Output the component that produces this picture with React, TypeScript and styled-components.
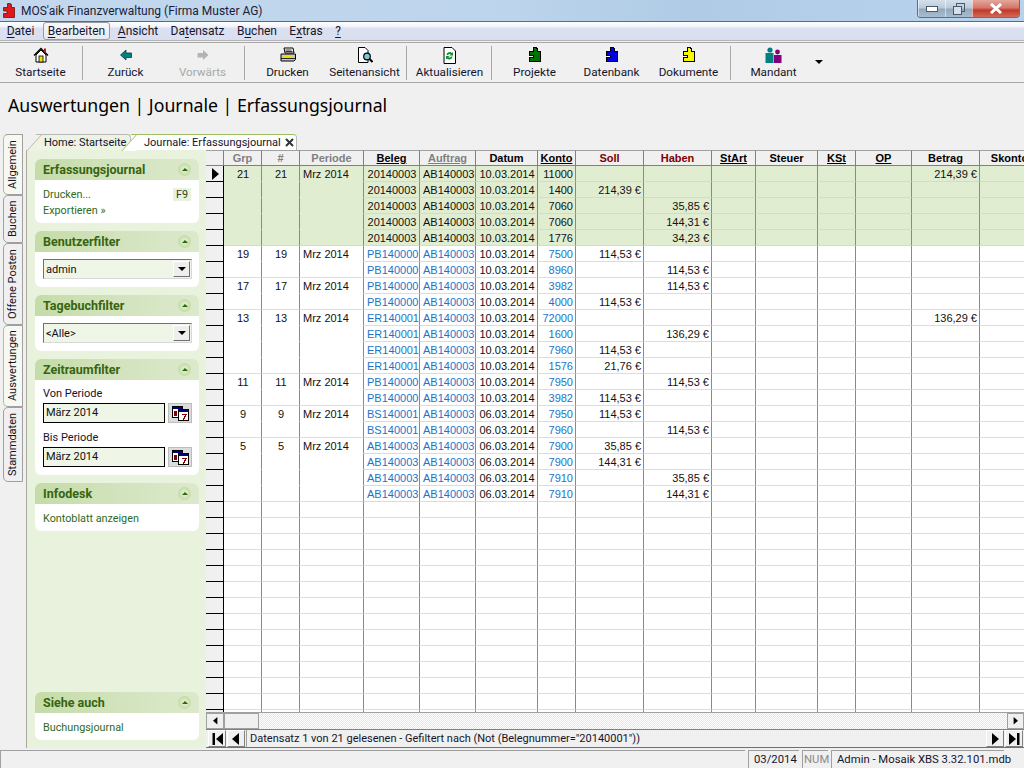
import React from 'react';
import styled, { createGlobalStyle } from 'styled-components';

const GlobalStyle = createGlobalStyle`
  html, body { margin: 0; padding: 0; background: #f0f0f0; }
  * { box-sizing: border-box; }
`;

const uiFont = `Roboto, "Noto Sans", "Liberation Sans", sans-serif`;
const headFont = `"Noto Sans", "Liberation Sans", sans-serif`;
const gridFont = `"Liberation Sans", Arial, sans-serif`;

const Window = styled.div`
  width: 1024px;
  height: 768px;
  display: flex;
  flex-direction: column;
  overflow: hidden;
  background: #f0f0f0;
  font-family: ${uiFont};
  font-size: 11px;
  color: #000;
`;

const TitleBar = styled.div`
  height: 22px;
  flex: none;
  display: flex;
  align-items: flex-start;
  padding-left: 2px;
  background: linear-gradient(90deg, #c3d8ee 0%, #bcd4ec 50%, #afcbe5 68%, #b5d0ea 85%, #b8d2ea 100%);
  border-bottom: 1px solid #5d6b79;
`;

const LogoSlot = styled.div`
  margin-top: 3px;
  height: 15px;
`;

const TitleText = styled.span`
  margin: 2px 0 0 5px;
  font-size: 12px;
  line-height: 18px;
  color: #1c1c38;
  flex: 1;
`;

const WindowButtons = styled.div`
  display: flex;
  height: 18px;
  margin-right: 4px;
  border: 1px solid #5f6f80;
  border-top: 0;
  border-radius: 0 0 4px 4px;
  overflow: hidden;
`;

const WindowButton = styled.div<{ $w: number; $close?: boolean }>`
  width: ${p => p.$w}px;
  display: flex;
  align-items: center;
  justify-content: center;
  border-left: 1px solid rgba(255, 255, 255, 0.55);
  background: ${p =>
    p.$close
      ? 'linear-gradient(#e3a79c 0%, #d6776a 45%, #bf3a2a 60%, #d26a55 100%)'
      : 'linear-gradient(#d5e0ec 0%, #bccbdb 45%, #95a9bd 55%, #a9bdd0 100%)'};
`;

const MenuBar = styled.div`
  height: 19px;
  flex: none;
  display: flex;
  align-items: center;
  padding-left: 3px;
  background: linear-gradient(#ffffff 0%, #f2f4fa 25%, #dce1f2 35%, #d9dff0 100%);
  border-bottom: 1px solid #b4b4b4;
`;

const MenuItem = styled.div<{ $w: number; $hot?: boolean }>`
  width: ${p => p.$w}px;
  height: 18px;
  margin: 0 ${p => (p.$hot ? 4 : 0)}px 0 ${p => (p.$hot ? 5 : 0)}px;
  text-align: center;
  font-size: 12px;
  color: #15152c;
  border-radius: 3px;
  border: ${p => (p.$hot ? '1px solid #9a9a9a' : '0')};
  line-height: ${p => (p.$hot ? 16 : 18)}px;
  background: ${p => (p.$hot ? 'linear-gradient(#f8f8fb, #e7e9f2)' : 'transparent')};
  u { text-underline-offset: 2px; }
`;

const ToolBar = styled.div`
  height: 41px;
  flex: none;
  margin-top: 1px;
  display: flex;
  align-items: center;
  padding-left: 2px;
  border-top: 1px solid #a8a8a8;
  border-bottom: 1px solid #a8a8a8;
`;

const ToolButton = styled.div<{ $off?: boolean }>`
  width: 77px;
  height: 38px;
  display: flex;
  flex-direction: column;
  align-items: center;
  font-size: 11.7px;
  line-height: 16px;
  color: ${p => (p.$off ? '#a8a8a8' : '#14142a')};
`;

const ToolIcon = styled.div`
  height: 20px;
  padding-top: 3px;
  display: flex;
  justify-content: center;
`;

const ToolSep = styled.div`
  width: 1px;
  height: 34px;
  margin: 0 4px 0 3px;
  background: #a8a8a8;
`;

const DropArrow = styled.div`
  width: 0;
  height: 0;
  margin: 0 0 0 3px;
  border: 4px solid transparent;
  border-top: 4px solid #000;
  border-bottom: 0;
  position: relative;
  top: -1px;
`;

const Heading = styled.h1`
  height: 51px;
  flex: none;
  margin: 0;
  padding: 10px 0 0 8px;
  font-family: ${headFont};
  font-weight: 400;
  font-size: 17.7px;
  line-height: 24px;
  color: #000;
`;

const Main = styled.div`
  height: 616px;
  flex: none;
  display: flex;
`;

const SideTabs = styled.div`
  width: 26px;
  flex: none;
  padding: 0 0 0 3px;
  display: flex;
  flex-direction: column;
`;

const SideTab = styled.div<{ $h: number; $active?: boolean }>`
  width: 20px;
  height: ${p => p.$h}px;
  writing-mode: vertical-rl;
  transform: rotate(180deg);
  text-align: center;
  font-size: 11px;
  line-height: 18px;
  color: #14142a;
  background: ${p => (p.$active ? '#f6f8f1' : '#f0f0f0')};
  border: 1px solid #a0a0a0;
  border-right-color: ${p => (p.$active ? '#a8c878' : '#a0a0a0')};
  border-radius: 0 5px 5px 0;
`;

const Workspace = styled.div`
  flex: 1;
  min-width: 0;
  display: flex;
  flex-direction: column;
`;

const TabStrip = styled.div`
  height: 16px;
  flex: none;
  display: flex;
  align-items: flex-end;
  padding-left: 10px;
`;

const DocTab = styled.div<{ $w: number; $active?: boolean }>`
  position: relative;
  width: ${p => p.$w}px;
  height: 16px;
  display: flex;
  align-items: center;
  gap: 4px;
  padding-left: ${p => (p.$active ? 13 : 8)}px;
  font-size: 11px;
  line-height: 14px;
  white-space: nowrap;
  color: #14142a;
  background: ${p => (p.$active ? '#ffffff' : '#eef3e4')};
  border-top: 1px solid ${p => (p.$active ? '#9cc060' : '#b8b8b8')};
  border-right: 1px solid #b8b8b8;
  border-radius: 0 4px 0 0;
  z-index: ${p => (p.$active ? 2 : 1)};
  &::before {
    content: '';
    position: absolute;
    left: -2px;
    top: -1px;
    width: 14px;
    height: 16px;
    background: inherit;
    border-left: 1px solid ${p => (p.$active ? '#9cc060' : '#b8b8b8')};
    border-top: 1px solid ${p => (p.$active ? '#9cc060' : '#b8b8b8')};
    transform: skewX(-42deg);
    z-index: -1;
  }
`;

const Content = styled.div`
  flex: 1;
  min-height: 0;
  display: flex;
`;

const Sidebar = styled.aside`
  width: 180px;
  height: 598px;
  flex: none;
  display: flex;
  flex-direction: column;
  gap: 8px;
  padding: 9px 7px 8px 8px;
  background: #e9f2dd;
  border-left: 1px solid #a8a89c;
`;

const Card = styled.section<{ $bottom?: boolean }>`
  border-radius: 6px;
  overflow: hidden;
  background: #fff;
  margin-top: ${p => (p.$bottom ? 'auto' : '0')};
`;

const CardHead = styled.div`
  height: 21px;
  display: flex;
  align-items: center;
  justify-content: space-between;
  padding: 0 8px;
  background: linear-gradient(90deg, #c4dca8 0%, #d2e3bd 50%, #dce9cc 100%);
  font-weight: 700;
  font-size: 12.5px;
  color: #37640f;
`;

const Collapse = styled.div`
  width: 13px;
  height: 13px;
  border-radius: 50%;
  background: radial-gradient(circle, #eaf3dc 0%, #c2dba2 70%, #b5d192 100%);
  display: flex;
  align-items: center;
  justify-content: center;
  &::after {
    content: '';
    border: 3px solid transparent;
    border-bottom: 3px solid #2f6410;
    border-top: 0;
  }
`;

const CardBody = styled.div<{ $end?: number }>`
  padding: 6px 8px ${p => p.$end ?? 5}px;
  display: flex;
  flex-direction: column;
`;

const LinkRow = styled.div`
  display: flex;
  justify-content: space-between;
  height: 16px;
  align-items: center;
  color: #2f6a22;
  font-size: 10.8px;
`;

const KeyHint = styled.span`
  width: 18px;
  height: 13px;
  text-align: center;
  line-height: 13px;
  background: #e9f2dd;
  color: #30421f;
`;

const SelectBox = styled.div`
  height: 20px;
  margin: 1px -1px 0 0;
  display: flex;
  align-items: center;
  justify-content: space-between;
  padding-left: 2px;
  background: #f0f6e7;
  border: 1px solid;
  border-color: #707070 #d8d8d8 #d8d8d8 #707070;
  color: #111;
`;

const SelectButton = styled.div`
  width: 17px;
  height: 16px;
  margin-right: 1px;
  background: #eeeeee;
  border: 1px solid;
  border-color: #fff #707070 #707070 #fff;
  display: flex;
  align-items: center;
  justify-content: center;
  &::after {
    content: '';
    border: 4px solid transparent;
    border-top: 4px solid #000;
    border-bottom: 0;
  }
`;

const FieldLabel = styled.div<{ $gap?: number }>`
  height: 16px;
  margin-top: ${p => p.$gap ?? 0}px;
  line-height: 16px;
  color: #14142a;
`;

const FieldRow = styled.div`
  display: flex;
  justify-content: space-between;
  margin: 1px -1px 0 0;
  height: 20px;
`;

const DateInput = styled.div`
  width: 122px;
  padding-left: 2px;
  line-height: 18px;
  background: #eff5e7;
  border: 1px solid #000;
  color: #111;
`;

const CalendarButton = styled.div`
  width: 24px;
  background: #dcdcdc;
  border: 1px solid #bcbcbc;
  display: flex;
  align-items: center;
  justify-content: center;
`;

const GridPane = styled.div`
  flex: 1;
  min-width: 0;
  display: flex;
  flex-direction: column;
  border-bottom: 1px solid #707070;
  height: 598px;
`;

const GridScroll = styled.div`
  height: 562px;
  flex: none;
  overflow: hidden;
`;

const GridRow = styled.div`
  display: flex;
  height: 16px;
  width: 900px;
`;

const Selector = styled.div<{ $head?: boolean }>`
  width: 18px;
  flex: none;
  background: #f0f0f0;
  border-top: ${p => (p.$head ? '1px solid #a0a0a0' : '0')};
  border-right: 1px solid ${p => (p.$head ? '#808080' : '#000')};
  border-bottom: 1px solid ${p => (p.$head ? '#808080' : '#000')};
  display: flex;
  align-items: center;
  justify-content: center;
`;

const HeadCell = styled.div<{ $w: number; $tone: string; $line?: boolean }>`
  width: ${p => p.$w}px;
  flex: none;
  text-align: center;
  font-family: ${gridFont};
  font-weight: 700;
  font-size: 11px;
  line-height: 14px;
  background: #f0f0f0;
  color: ${p => p.$tone};
  text-decoration: ${p => (p.$line ? 'underline' : 'none')};
  border-top: 1px solid #a0a0a0;
  border-right: 1px solid #808080;
  border-bottom: 1px solid #808080;
`;

const Cell = styled.div<{ $w: number; $align: string; $tone: string; $green: boolean; $open?: boolean }>`
  width: ${p => p.$w}px;
  flex: none;
  padding: 1px 2px 0 3px;
  text-align: ${p => p.$align};
  font-family: ${gridFont};
  font-size: 11px;
  line-height: 14px;
  white-space: nowrap;
  overflow: hidden;
  color: ${p => p.$tone};
  background: ${p => (p.$green ? '#e1edd1' : '#fff')};
  border-right: 1px solid #8a8a8a;
  border-bottom: 1px solid ${p => (p.$open ? (p.$green ? '#e1edd1' : '#fff') : p.$green ? '#d6d9d0' : '#dcdcdc')};
`;

const ScrollBar = styled.div`
  height: 18px;
  flex: none;
  display: flex;
  background: repeating-conic-gradient(#ffffff 0 25%, #e6e6e6 0 50%) 0 0 / 2px 2px;
  border-top: 1px solid #a0a0a0;
  border-bottom: 1px solid #808080;
`;

const ScrollButton = styled.div<{ $w: number; $end?: boolean }>`
  width: ${p => p.$w}px;
  margin-left: ${p => (p.$end ? 'auto' : '0')};
  background: #f0f0f0;
  border: 1px solid #a0a0a0;
  display: flex;
  align-items: center;
  justify-content: center;
`;

const NavBar = styled.div`
  height: 17px;
  flex: none;
  display: flex;
  align-items: center;
  padding: 0 0 0 2px;
  background: #f0f0f0;
`;

const NavButton = styled.div`
  width: 18px;
  height: 17px;
  margin-right: 1px;
  background: #f0f0f0;
  border: 1px solid;
  border-color: #fff #808080 #808080 #fff;
  display: flex;
  align-items: center;
  justify-content: center;
`;

const NavText = styled.div`
  flex: 1;
  padding-left: 3px;
  border-left: 1px solid #a0a0a0;
  font-size: 11px;
  line-height: 18px;
  height: 17px;
  color: #14142a;
  white-space: nowrap;
`;

const StatusBar = styled.div`
  height: 18px;
  flex: none;
  display: flex;
  padding-right: 20px;
  gap: 3px;
`;

const StatusCell = styled.div<{ $w?: number; $dim?: boolean }>`
  ${p => (p.$w ? `width: ${p.$w}px; flex: none;` : 'flex: 1;')}
  padding-left: ${p => (p.$dim ? 1 : p.$w ? 5 : 0)}px;
  font-size: 11.3px;
  line-height: 18px;
  white-space: nowrap;
  color: ${p => (p.$dim ? '#8a8a8a' : '#14142a')};
  border-top: 1px solid #a0a0a0;
  border-left: 1px solid #a0a0a0;
`;

/* ---- drawings ---- */

const PUZZLE_PATH = 'M4.5.5h3v1h1v3h3v10H.5v-4H4V8H.5V4.5h4z';

const Puzzle = ({ fill }: { fill: string }) => (
  <svg width="12" height="15" viewBox="0 0 12 15" shapeRendering="crispEdges">
    <path d={PUZZLE_PATH} fill={fill} stroke="#000" />
    <rect x="1" y="8.5" width="3" height="1.5" fill="#fff" />
  </svg>
);

const Logo = () => (
  <svg width="14" height="15" viewBox="0 0 12 15">
    <path d={PUZZLE_PATH} fill="#e01818" stroke="#600" strokeWidth="0.7" />
  </svg>
);

const HomeIcon = () => (
  <svg width="16" height="16" viewBox="0 0 16 16">
    <path d="M1 8.5 8 1.5l7 7" fill="none" stroke="#000" strokeWidth="1.4" />
    <path d="M3 8v7h10V8L8 3z" fill="#fff" stroke="#000" />
    <rect x="6" y="9" width="4" height="6" fill="#f4e000" stroke="#000" strokeWidth="0.8" />
    <rect x="11" y="1.5" width="2" height="4" fill="#b02020" />
  </svg>
);

const ArrowLeftIcon = () => (
  <svg width="12" height="16" viewBox="0 0 12 16">
    <path d="M0.5 8 6 3v3h5.5v4.5H6V13z" fill="#008080" stroke="#0a3a3a" strokeWidth="0.8" />
  </svg>
);

const ArrowRightIcon = () => (
  <svg width="12" height="16" viewBox="0 0 12 16">
    <path d="M11.5 8 6 3v3H0.5v4.5H6V13z" fill="#b4b4b4" />
  </svg>
);

const PrinterIcon = () => (
  <svg width="16" height="16" viewBox="0 0 16 16">
    <path d="M4 1h9l1 5H5z" fill="#fff" stroke="#000" />
    <path d="M5.5 3h6M5.5 4.5h7" stroke="#000" strokeWidth="0.8" />
    <path d="M1 7h14.5v5.5l-1.5 1.5H1z" fill="#c8c8c8" stroke="#000" />
    <rect x="3" y="8.5" width="8" height="2" fill="#f4e000" />
    <path d="M1 11.5h14" stroke="#000" strokeWidth="0.8" />
  </svg>
);

const PreviewIcon = () => (
  <svg width="16" height="16" viewBox="0 0 16 16">
    <path d="M1.5 0.5H8l3 3v12H1.5z" fill="#fff" stroke="#000" />
    <circle cx="10" cy="9.5" r="3.3" fill="#7fc8d8" stroke="#000" strokeWidth="1.2" />
    <path d="M12.5 12l3 3" stroke="#000" strokeWidth="2" />
  </svg>
);

const RefreshIcon = () => (
  <svg width="13" height="17" viewBox="0 0 13 17">
    <path d="M1 0.5h8l3.5 3.5v12.5H1z" fill="#fff" stroke="#000" />
    <path d="M3.5 8a3.2 3.2 0 0 1 5.5-2l1-1v3.5H6.5l1.2-1.2a2 2 0 0 0-2.7 0.7z" fill="#109030" />
    <path d="M9.5 9.5a3.2 3.2 0 0 1-5.5 2l-1 1V9h3.5l-1.2 1.2a2 2 0 0 0 2.7-.7z" fill="#109030" />
  </svg>
);

const PeopleIcon = () => (
  <svg width="17" height="16" viewBox="0 0 17 16">
    <circle cx="5" cy="3" r="2.6" fill="#008080" />
    <path d="M0.5 6h8v10h-8z" fill="#008080" />
    <circle cx="12.5" cy="5" r="2.4" fill="#800080" />
    <path d="M9 8h7.5v8H9z" fill="#800080" />
  </svg>
);

const CalendarIcon = () => (
  <svg width="17" height="15" viewBox="0 0 17 15" shapeRendering="crispEdges">
    <rect x="0.5" y="0.5" width="10" height="11" fill="#fff" stroke="#000" />
    <rect x="1" y="1" width="9" height="2" fill="#000080" />
    <rect x="2" y="5" width="3" height="5" fill="#800000" />
    <rect x="6.5" y="3.5" width="10" height="11" fill="#fff" stroke="#000" />
    <rect x="7" y="4" width="9" height="2" fill="#000080" />
    <path d="M9.5 7.5h5v1l-2 5h-1.5l2-5h-3.5z" fill="#800000" />
  </svg>
);

const Triangle = ({ left, size = 8 }: { left?: boolean; size?: number }) => (
  <svg width={size} height={size * 1.5} viewBox="0 0 8 12">
    <path d={left ? 'M7 0L0 6l7 6z' : 'M1 0l7 6-7 6z'} fill="#000" />
  </svg>
);

const EndTriangle = ({ left }: { left?: boolean }) => (
  <svg width="11" height="12" viewBox="0 0 11 12">
    <path d={left ? 'M11 0L4 6l7 6z' : 'M0 0l7 6-7 6z'} fill="#000" />
    <rect x={left ? 0.5 : 8} y="0" width="2.5" height="12" fill="#000" />
  </svg>
);

/* ---- data ---- */

type Col = { key: string; title: string; w: number; align: string; tone: string; line?: boolean };

const columns: Col[] = [
  { key: 'grp', title: 'Grp', w: 38, align: 'center', tone: '#808080' },
  { key: 'nr', title: '#', w: 38, align: 'center', tone: '#808080' },
  { key: 'per', title: 'Periode', w: 64, align: 'left', tone: '#808080' },
  { key: 'beleg', title: 'Beleg', w: 56, align: 'center', tone: '#000', line: true },
  { key: 'auf', title: 'Auftrag', w: 56, align: 'center', tone: '#808080', line: true },
  { key: 'dat', title: 'Datum', w: 62, align: 'center', tone: '#000' },
  { key: 'kto', title: 'Konto', w: 38, align: 'right', tone: '#000', line: true },
  { key: 'soll', title: 'Soll', w: 68, align: 'right', tone: '#800000' },
  { key: 'hab', title: 'Haben', w: 68, align: 'right', tone: '#800000' },
  { key: 'art', title: 'StArt', w: 44, align: 'center', tone: '#000', line: true },
  { key: 'st', title: 'Steuer', w: 62, align: 'center', tone: '#000' },
  { key: 'kst', title: 'KSt', w: 38, align: 'center', tone: '#000', line: true },
  { key: 'op', title: 'OP', w: 56, align: 'center', tone: '#000', line: true },
  { key: 'bet', title: 'Betrag', w: 68, align: 'right', tone: '#000' },
  { key: 'sk', title: 'Skonto', w: 60, align: 'right', tone: '#000' },
];

type Entry = {
  grp?: number;
  beleg: string;
  dat: string;
  kto: string;
  soll?: string;
  hab?: string;
  bet?: string;
  end?: boolean;
};

const d1 = '10.03.2014';
const d2 = '06.03.2014';

const entries: Entry[] = [
  { grp: 21, beleg: '20140003', dat: d1, kto: '11000', bet: '214,39 €' },
  { beleg: '20140003', dat: d1, kto: '1400', soll: '214,39 €' },
  { beleg: '20140003', dat: d1, kto: '7060', hab: '35,85 €' },
  { beleg: '20140003', dat: d1, kto: '7060', hab: '144,31 €' },
  { beleg: '20140003', dat: d1, kto: '1776', hab: '34,23 €', end: true },
  { grp: 19, beleg: 'PB140000', dat: d1, kto: '7500', soll: '114,53 €' },
  { beleg: 'PB140000', dat: d1, kto: '8960', hab: '114,53 €', end: true },
  { grp: 17, beleg: 'PB140000', dat: d1, kto: '3982', hab: '114,53 €' },
  { beleg: 'PB140000', dat: d1, kto: '4000', soll: '114,53 €', end: true },
  { grp: 13, beleg: 'ER140001', dat: d1, kto: '72000', bet: '136,29 €' },
  { beleg: 'ER140001', dat: d1, kto: '1600', hab: '136,29 €' },
  { beleg: 'ER140001', dat: d1, kto: '7960', soll: '114,53 €' },
  { beleg: 'ER140001', dat: d1, kto: '1576', soll: '21,76 €', end: true },
  { grp: 11, beleg: 'PB140000', dat: d1, kto: '7950', hab: '114,53 €' },
  { beleg: 'PB140000', dat: d1, kto: '3982', soll: '114,53 €', end: true },
  { grp: 9, beleg: 'BS140001', dat: d2, kto: '7950', soll: '114,53 €' },
  { beleg: 'BS140001', dat: d2, kto: '7960', hab: '114,53 €', end: true },
  { grp: 5, beleg: 'AB140003', dat: d2, kto: '7900', soll: '35,85 €' },
  { beleg: 'AB140003', dat: d2, kto: '7900', soll: '144,31 €' },
  { beleg: 'AB140003', dat: d2, kto: '7910', hab: '35,85 €' },
  { beleg: 'AB140003', dat: d2, kto: '7910', hab: '144,31 €', end: true },
];

const BLUE = '#1a74c8';

const cellText = (e: Entry, key: string): string => {
  switch (key) {
    case 'grp':
    case 'nr':
      return e.grp ? String(e.grp) : '';
    case 'per':
      return e.grp ? 'Mrz 2014' : '';
    case 'beleg':
      return e.beleg;
    case 'auf':
      return 'AB140003';
    case 'dat':
      return e.dat;
    case 'kto':
      return e.kto;
    case 'soll':
      return e.soll ?? '';
    case 'hab':
      return e.hab ?? '';
    case 'bet':
      return e.bet ?? '';
    default:
      return '';
  }
};

const toneFor = (key: string, green: boolean): string => {
  if (!green && ['beleg', 'auf', 'kto'].includes(key)) return BLUE;
  return '#111';
};

const App: React.FC = () => {
  const emptyRows = Array.from({ length: 14 });
  return (
    <Window>
      <GlobalStyle />
      <TitleBar>
        <LogoSlot><Logo /></LogoSlot>
        <TitleText>MOS'aik Finanzverwaltung (Firma Muster AG)</TitleText>
        <WindowButtons>
          <WindowButton $w={27}>
            <svg width="12" height="6" viewBox="0 0 12 6">
              <rect x="0.5" y="0.5" width="11" height="5" fill="#fff" stroke="#4a5a6a" />
            </svg>
          </WindowButton>
          <WindowButton $w={27}>
            <svg width="12" height="12" viewBox="0 0 12 12">
              <rect x="3.5" y="0.5" width="8" height="8" fill="none" stroke="#4a5a6a" />
              <rect x="0.5" y="3.5" width="8" height="8" fill="#d5e0ec" stroke="#4a5a6a" />
            </svg>
          </WindowButton>
          <WindowButton $w={47} $close>
            <svg width="14" height="11" viewBox="0 0 14 11">
              <path d="M2 1l10 9M12 1L2 10" stroke="#fff" strokeWidth="3" />
            </svg>
          </WindowButton>
        </WindowButtons>
      </TitleBar>

      <MenuBar>
        <MenuItem $w={35}><u>D</u>atei</MenuItem>
        <MenuItem $w={67} $hot><u>B</u>earbeiten</MenuItem>
        <MenuItem $w={48}><u>A</u>nsicht</MenuItem>
        <MenuItem $w={71}>Da<u>t</u>ensatz</MenuItem>
        <MenuItem $w={48}>B<u>u</u>chen</MenuItem>
        <MenuItem $w={50}>E<u>x</u>tras</MenuItem>
        <MenuItem $w={14}><u>?</u></MenuItem>
      </MenuBar>

      <ToolBar>
        <ToolButton>
          <ToolIcon><HomeIcon /></ToolIcon>
          Startseite
        </ToolButton>
        <ToolSep />
        <ToolButton>
          <ToolIcon><ArrowLeftIcon /></ToolIcon>
          Zurück
        </ToolButton>
        <ToolButton $off>
          <ToolIcon><ArrowRightIcon /></ToolIcon>
          Vorwärts
        </ToolButton>
        <ToolSep />
        <ToolButton>
          <ToolIcon><PrinterIcon /></ToolIcon>
          Drucken
        </ToolButton>
        <ToolButton>
          <ToolIcon><PreviewIcon /></ToolIcon>
          Seitenansicht
        </ToolButton>
        <ToolSep />
        <ToolButton>
          <ToolIcon><RefreshIcon /></ToolIcon>
          Aktualisieren
        </ToolButton>
        <ToolSep />
        <ToolButton>
          <ToolIcon><Puzzle fill="#007000" /></ToolIcon>
          Projekte
        </ToolButton>
        <ToolButton>
          <ToolIcon><Puzzle fill="#0000e0" /></ToolIcon>
          Datenbank
        </ToolButton>
        <ToolButton>
          <ToolIcon><Puzzle fill="#f8f800" /></ToolIcon>
          Dokumente
        </ToolButton>
        <ToolSep />
        <ToolButton>
          <ToolIcon><PeopleIcon /></ToolIcon>
          Mandant
        </ToolButton>
        <DropArrow />
      </ToolBar>

      <Heading>Auswertungen | Journale | Erfassungsjournal</Heading>

      <Main>
        <SideTabs>
          <SideTab $h={61} $active>Allgemein</SideTab>
          <SideTab $h={48}>Buchen</SideTab>
          <SideTab $h={82}>Offene Posten</SideTab>
          <SideTab $h={82} $active>Auswertungen</SideTab>
          <SideTab $h={75}>Stammdaten</SideTab>
        </SideTabs>

        <Workspace>
          <TabStrip>
            <DocTab $w={95}>Home: Startseite</DocTab>
            <DocTab $w={166} $active>
              Journale: Erfassungsjournal
              <svg width="9" height="9" viewBox="0 0 9 9">
                <path d="M1 1l7 7M8 1L1 8" stroke="#333" strokeWidth="2" />
              </svg>
            </DocTab>
          </TabStrip>

          <Content>
            <Sidebar>
              <Card>
                <CardHead>Erfassungsjournal<Collapse /></CardHead>
                <CardBody>
                  <LinkRow>Drucken...<KeyHint>F9</KeyHint></LinkRow>
                  <LinkRow>Exportieren »</LinkRow>
                </CardBody>
              </Card>
              <Card>
                <CardHead>Benutzerfilter<Collapse /></CardHead>
                <CardBody $end={8}>
                  <SelectBox>admin<SelectButton /></SelectBox>
                </CardBody>
              </Card>
              <Card>
                <CardHead>Tagebuchfilter<Collapse /></CardHead>
                <CardBody $end={8}>
                  <SelectBox>&lt;Alle&gt;<SelectButton /></SelectBox>
                </CardBody>
              </Card>
              <Card>
                <CardHead>Zeitraumfilter<Collapse /></CardHead>
                <CardBody $end={8}>
                  <FieldLabel>Von Periode</FieldLabel>
                  <FieldRow>
                    <DateInput>März 2014</DateInput>
                    <CalendarButton><CalendarIcon /></CalendarButton>
                  </FieldRow>
                  <FieldLabel $gap={7}>Bis Periode</FieldLabel>
                  <FieldRow>
                    <DateInput>März 2014</DateInput>
                    <CalendarButton><CalendarIcon /></CalendarButton>
                  </FieldRow>
                </CardBody>
              </Card>
              <Card>
                <CardHead>Infodesk<Collapse /></CardHead>
                <CardBody>
                  <LinkRow>Kontoblatt anzeigen</LinkRow>
                </CardBody>
              </Card>
              <Card $bottom>
                <CardHead>Siehe auch<Collapse /></CardHead>
                <CardBody>
                  <LinkRow>Buchungsjournal</LinkRow>
                </CardBody>
              </Card>
            </Sidebar>

            <GridPane>
              <GridScroll>
                <GridRow>
                  <Selector $head />
                  {columns.map(c => (
                    <HeadCell key={c.key} $w={c.w} $tone={c.tone} $line={c.line}>{c.title}</HeadCell>
                  ))}
                </GridRow>
                {entries.map((e, i) => {
                  const green = i < 5;
                  return (
                    <GridRow key={i}>
                      <Selector>{i === 0 && <Triangle />}</Selector>
                      {columns.map(c => (
                        <Cell
                          key={c.key}
                          $w={c.w}
                          $align={c.align}
                          $tone={toneFor(c.key, green)}
                          $green={green}
                          $open={!e.end && ['grp', 'nr', 'per'].includes(c.key)}
                        >
                          {cellText(e, c.key)}
                        </Cell>
                      ))}
                    </GridRow>
                  );
                })}
                {emptyRows.map((_, i) => (
                  <GridRow key={i}>
                    <Selector />
                    {columns.map(c => (
                      <Cell key={c.key} $w={c.w} $align={c.align} $tone="#111" $green={false} />
                    ))}
                  </GridRow>
                ))}
              </GridScroll>
              <ScrollBar>
                <ScrollButton $w={18}><Triangle left size={5} /></ScrollButton>
                <ScrollButton $w={35} />
                <ScrollButton $w={17} $end><Triangle size={5} /></ScrollButton>
              </ScrollBar>
              <NavBar>
                <NavButton><EndTriangle left /></NavButton>
                <NavButton><Triangle left /></NavButton>
                <NavText>Datensatz 1 von 21 gelesenen - Gefiltert nach (Not (Belegnummer="20140001"))</NavText>
                <NavButton><Triangle /></NavButton>
                <NavButton><EndTriangle /></NavButton>
              </NavBar>
            </GridPane>
          </Content>
        </Workspace>
      </Main>

      <StatusBar>
        <StatusCell />
        <StatusCell $w={51}>03/2014</StatusCell>
        <StatusCell $w={26} $dim>NUM</StatusCell>
        <StatusCell $w={173}>Admin - Mosaik XBS 3.32.101.mdb</StatusCell>
      </StatusBar>
    </Window>
  );
};

export default App;
